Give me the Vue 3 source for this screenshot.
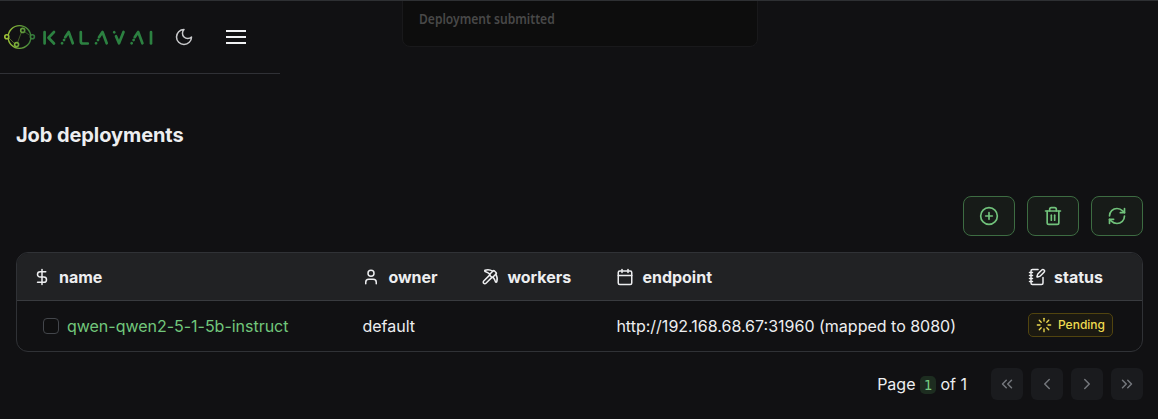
<script setup>
const columns = [
  { label: 'name', icon: ['M12 2v20', 'M17 5H9.5a3.5 3.5 0 0 0 0 7h5a3.5 3.5 0 0 1 0 7H6'] },
  { label: 'owner', icon: ['M19 21v-2a4 4 0 0 0-4-4H9a4 4 0 0 0-4 4v2', 'M8 7a4 4 0 1 0 8 0a4 4 0 1 0-8 0'] },
  {
    label: 'workers',
    icon: [
      'M14.531 12.469 6.619 20.38a1 1 0 1 1-3-3l7.912-7.912',
      'M15.686 4.314A12.5 12.5 0 0 0 5.461 2.958 1 1 0 0 0 5.58 4.71a22 22 0 0 1 6.318 3.393',
      'M17.7 3.7a1 1 0 0 0-1.4 0l-4.6 4.6a1 1 0 0 0 0 1.4l2.6 2.6a1 1 0 0 0 1.4 0l4.6-4.6a1 1 0 0 0 0-1.4z',
      'M19.686 8.314a12.501 12.501 0 0 1 1.356 10.225 1 1 0 0 1-1.751-.119 22 22 0 0 0-3.393-6.319',
    ],
  },
  { label: 'endpoint', icon: ['M8 2v4', 'M16 2v4', 'M5 4h14a2 2 0 0 1 2 2v14a2 2 0 0 1-2 2H5a2 2 0 0 1-2-2V6a2 2 0 0 1 2-2z', 'M3 10h18'] },
  {
    label: 'status',
    icon: [
      'M13.4 2H6a2 2 0 0 0-2 2v16a2 2 0 0 0 2 2h12a2 2 0 0 0 2-2v-7.4',
      'M2 6h4', 'M2 10h4', 'M2 14h4', 'M2 18h4',
      'M21.378 5.626a1 1 0 1 0-3.004-3.004l-5.01 5.012a2 2 0 0 0-.506.854l-.837 2.87a.5.5 0 0 0 .62.62l2.87-.837a2 2 0 0 0 .854-.506z',
    ],
  },
]
const actions = [
  { label: 'Add', icon: ['M2 12a10 10 0 1 0 20 0a10 10 0 1 0-20 0', 'M8 12h8', 'M12 8v8'] },
  { label: 'Delete', icon: ['M3 6h18', 'M19 6v14c0 1-1 2-2 2H7c-1 0-2-1-2-2V6', 'M8 6V4c0-1 1-2 2-2h4c1 0 2 1 2 2v2', 'M10 11v6', 'M14 11v6'] },
  { label: 'Refresh', icon: ['M3 12a9 9 0 0 1 9-9 9.75 9.75 0 0 1 6.74 2.74L21 8', 'M21 3v5h-5', 'M21 12a9 9 0 0 1-9 9 9.75 9.75 0 0 1-6.74-2.74L3 16', 'M8 16H3v5'] },
]
const pager = [
  { label: 'First', icon: ['m11 17-5-5 5-5', 'm18 17-5-5 5-5'] },
  { label: 'Previous', icon: ['m15 18-6-6 6-6'] },
  { label: 'Next', icon: ['m9 18 6-6-6-6'] },
  { label: 'Last', icon: ['m6 17 5-5-5-5', 'm13 17 5-5-5-5'] },
]
const rays = ['M12 2v4', 'm16.2 7.8 2.9-2.9', 'M18 12h4', 'm16.2 16.2 2.9 2.9', 'M12 18v4', 'm4.9 19.1 2.9-2.9', 'M2 12h4', 'm4.9 4.9 2.9 2.9']
</script>

<template>
  <div class="page">
    <header class="topbar">
      <svg class="logo" viewBox="0 0 152 26" aria-label="Kalavai">
        <defs>
          <linearGradient id="ring" x1="0" x2="32" y1="0" y2="0" gradientUnits="userSpaceOnUse">
            <stop offset="0" stop-color="#a5c736" />
            <stop offset="0.5" stop-color="#6ba33a" />
            <stop offset="1" stop-color="#27713b" />
          </linearGradient>
        </defs>
        <g fill="none" stroke="url(#ring)" stroke-width="1.4">
          <circle cx="15.5" cy="13" r="11.4" />
          <path d="M4 13l8 8M13.2 19.5l4.5-12M20 7.5l7 4.5" stroke-width=".7" opacity=".7" />
          <g fill="#111113" stroke-width="1.6">
            <circle cx="2.8" cy="12.7" r="2" /><circle cx="18.7" cy="6.4" r="2" />
            <circle cx="12.6" cy="20.6" r="2" /><circle cx="28.4" cy="12.7" r="2" />
          </g>
        </g>
        <g class="wordmark">
          <path d="M40.6 8v11.5M50 8l-5.5 5.7 5.5 5.8" />
          <path d="M61.2 13.2l3.5-5.2 4.1 11.3M58 19.3l.1-.1M60 16l.1-.1" />
          <path d="M76.8 8v9.5q0 2 2 2h5" />
          <path d="M95 13.2l3.5-5.2 4.2 11.3M92 19.3l.1-.1M94 16l.1-.1" />
          <path d="M110.2 8.3l.1.1M112 12.2l3 7.1 4.5-11.3" />
          <path d="M130.7 13.2l3.5-5.2 4.2 11.3M127.6 19.3l.1-.1M129.6 16l.1-.1" />
          <path d="M147 8v11.5" />
        </g>
      </svg>
      <svg class="moon line" viewBox="0 0 24 24"><path d="M12 3a6 6 0 0 0 9 9 9 9 0 1 1-9-9Z" /></svg>
      <div class="menu"><i></i><i></i><i></i></div>
    </header>

    <aside class="toast"><span>Deployment submitted</span></aside>

    <main>
      <h1>Job deployments</h1>
      <div class="actions">
        <button v-for="a in actions" :key="a.label" :aria-label="a.label">
          <svg class="line" viewBox="0 0 24 24"><path v-for="d in a.icon" :key="d" :d="d" /></svg>
        </button>
      </div>
      <section class="table">
        <div class="row head">
          <div v-for="c in columns" :key="c.label" class="cell">
            <svg class="line" viewBox="0 0 24 24"><path v-for="d in c.icon" :key="d" :d="d" /></svg>
            <span>{{ c.label }}</span>
          </div>
        </div>
        <div class="row body">
          <div class="cell job"><i class="check"></i><a>qwen-qwen2-5-1-5b-instruct</a></div>
          <div class="cell">default</div>
          <div class="cell"></div>
          <div class="cell">http://192.168.68.67:31960 (mapped to 8080)</div>
          <div class="cell">
            <span class="badge">
              <svg class="line" viewBox="0 0 24 24"><path v-for="d in rays" :key="d" :d="d" /></svg>Pending
            </span>
          </div>
        </div>
      </section>
      <footer>
        <p>Page <code>1</code> of 1</p>
        <nav>
          <button v-for="p in pager" :key="p.label" :aria-label="p.label" disabled>
            <svg class="line" viewBox="0 0 24 24"><path v-for="d in p.icon" :key="d" :d="d" /></svg>
          </button>
        </nav>
      </footer>
    </main>
  </div>
</template>

<style>
body { margin: 0; background: #111113; }
</style>

<style scoped>
* { box-sizing: border-box; }
.page {
  position: relative;
  height: 419px;
  overflow: hidden;
  border-top: 1px solid #2e3033;
  background: #111113;
  color: #edeef0;
  font: 400 16px/24px Inter, sans-serif;
}
.line { display: block; flex: none; fill: none; stroke: currentColor; stroke-width: 2; stroke-linecap: round; stroke-linejoin: round; }
.topbar { display: flex; align-items: center; width: 280px; height: 73px; padding-left: 4px; border-bottom: 1px solid #303136; }
.logo { width: 152px; height: 26px; }
.wordmark { fill: none; stroke: #2c8141; stroke-width: 2.7; stroke-linecap: round; stroke-linejoin: round; }
.moon { width: 20px; height: 20px; margin-left: 18px; color: #c9cacc; stroke-width: 1.8; }
.menu { display: flex; flex-direction: column; gap: 4px; width: 20px; margin-left: 32px; }
.menu i { height: 2px; background: #f0f1f3; }
.toast {
  position: absolute; top: -11px; left: 402px; width: 356px; height: 57px;
  padding: 16px; border: 1px solid #19191b; border-radius: 8px;
  background: #0d0d0d; color: #484848;
  font: 600 14px/24px "Noto Sans", sans-serif;
}
.toast span { display: inline-block; white-space: nowrap; transform: scaleX(.862); transform-origin: left; }
main { padding: 47px 15px 0 16px; }
h1 { margin: 0; font-size: 20px; line-height: 28px; font-weight: 700; letter-spacing: -0.08px; }
.actions { display: flex; justify-content: flex-end; gap: 12px; margin-top: 47px; }
.actions button {
  display: grid; place-items: center; width: 52px; height: 40px; padding: 0;
  border: 1px solid #3d6c42; border-radius: 8px; background: #171b18; color: #71c27b;
}
.actions svg { width: 20px; height: 20px; }
.table { height: 100px; margin-top: 16px; border: 1px solid #303236; border-radius: 12px; overflow: hidden; }
.row { display: grid; grid-template-columns: 329.4px 119px 135px 411.6px 1fr; padding-left: 16px; }
.head { height: 48px; background: #212224; border-bottom: 1px solid #393b3f; font-weight: 700; }
.body { height: 50px; }
.cell { display: flex; align-items: center; white-space: nowrap; }
.head .cell { gap: 8px; padding-top: 1px; }
.head svg { width: 18px; height: 18px; }
.job { padding-left: 10px; gap: 8px; color: #71c77c; letter-spacing: -0.02px; }
.check { width: 16px; height: 16px; border: 1px solid #43464b; border-radius: 4px; background: #0f0f10; }
.badge {
  display: flex; align-items: center; gap: 6px; height: 24px; padding: 0 7px;
  margin-bottom: 2px; border: 1px solid #51440f; border-radius: 5px; background: #1b1911;
  color: #efdc50; font-size: 12px; font-weight: 500;
}
.badge svg { width: 16px; height: 16px; }
footer { display: flex; justify-content: flex-end; align-items: center; gap: 24px; margin-top: 16px; }
p { margin: 0; }
code {
  display: inline-block; width: 16px; height: 18px; border-radius: 5px; text-align: center;
  background: #1d2d20; color: #75cc80; font: 14px/18px "DejaVu Sans Mono", monospace;
}
nav { display: flex; gap: 8px; }
nav button { display: grid; place-items: center; width: 32px; height: 32px; padding: 0; border: 0; border-radius: 6px; background: #1a1b1e; color: #74777c; }
nav svg { width: 18px; height: 18px; }
</style>
